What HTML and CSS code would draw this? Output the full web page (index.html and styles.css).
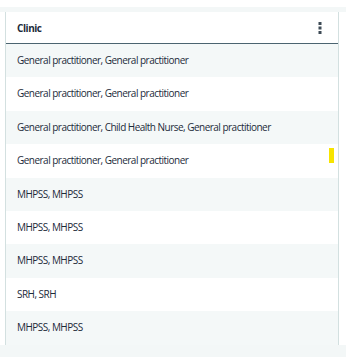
FILE: index.html
```html
<!DOCTYPE html>
<html lang="en">
<head>
    <meta charset="UTF-8">
    <title>Clinic table</title>
    <link rel="stylesheet" href="styles.css">
</head>
<body>

    <!-- Top band -->
    <div class="band"></div>

    <!-- Table -->
    <div class="grid">
        <div class="header">
            <span class="title">Clinic</span>
            <svg class="menu" width="4" height="12" viewBox="0 0 4 12">
                <rect x="0.5" y="0" width="3" height="3" fill="#3d4a55"/>
                <rect x="0.5" y="4.5" width="3" height="3" fill="#3d4a55"/>
                <rect x="0.5" y="9" width="3" height="3" fill="#3d4a55"/>
            </svg>
        </div>
        <div class="row odd">General practitioner, General practitioner</div>
        <div class="row">General practitioner, General practitioner</div>
        <div class="row odd">General practitioner, Child Health Nurse, General practitioner</div>
        <div class="row">General practitioner, General practitioner<span class="mark"></span></div>
        <div class="row odd">MHPSS, MHPSS</div>
        <div class="row">MHPSS, MHPSS</div>
        <div class="row odd">MHPSS, MHPSS</div>
        <div class="row">SRH, SRH</div>
        <div class="row odd">MHPSS, MHPSS</div>
    </div>

    <div class="footer"></div>

</body>
</html>
```

FILE: styles.css
```css
/* General styles */
body {
    font-family: 'Open Sans', sans-serif;
    margin: 0;
    padding: 0;
    background-color: #ffffff;
    color: #1c2b3a;
}

.band {
    margin-top: 7px;
    height: 5px;
    background-color: #f3f7f7;
}

/* Grid */
.grid {
    margin: 0 7px 0 5px;
    border-left: 1px solid #d3e0e0;
    border-right: 1px solid #d3e0e0;
}
.header {
    display: flex;
    align-items: center;
    justify-content: space-between;
    height: 31px;
    padding: 0 16px 0 11px;
    border-bottom: 1px solid #4b6470;
}
.title {
    font-size: 10px;
    font-weight: 700;
    letter-spacing: -0.45px;
}
.menu {
    display: block;
}
.row {
    position: relative;
    height: 33.4px;
    line-height: 33.4px;
    padding-left: 11px;
    font-size: 10px;
    letter-spacing: -0.52px;
    white-space: nowrap;
}
.row.odd {
    background-color: #f4f8f8;
}
.mark {
    position: absolute;
    right: 4px;
    top: 4px;
    width: 5px;
    height: 15px;
    background-color: #f7e400;
}

.footer {
    height: 20px;
    background-color: #f3f7f7;
}
```
